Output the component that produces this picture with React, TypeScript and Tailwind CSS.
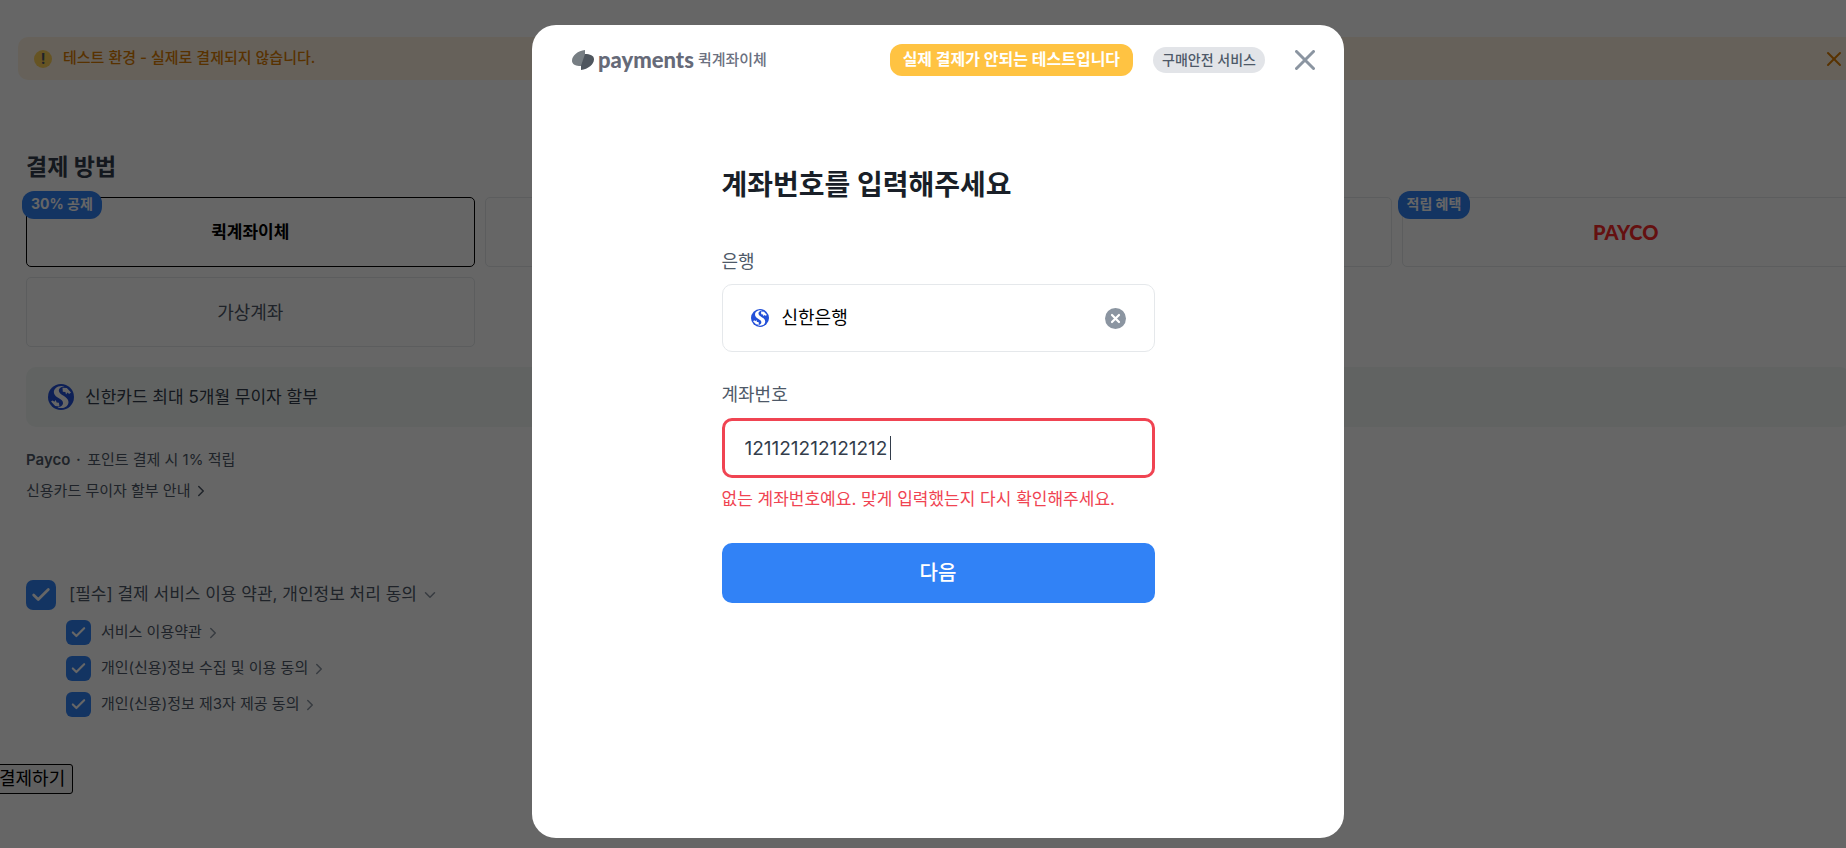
import React, { useState } from 'react';
import { Check, ChevronDown, ChevronRight, X } from 'lucide-react';

const ShinhanLogo = ({ className }: { className: string }) => (
  <svg viewBox="0 0 26 26" className={className} aria-hidden="true">
    <circle cx="13" cy="13" r="13" fill="#2350d8" />
    <path
      d="M16.500 2.300C10 .8 5 4.500 6 9.300c1 4.800 9.200 5.500 9 9.700-.1 2.500-2.600 4.300-5.700 4.200 5.300 2.300 11.200-.2 11.200-5.200 0-5.600-9.800-6.900-9.700-11.500 0-2.200 2.200-3.800 5.700-4.200z"
      fill="#fff"
    />
    <path d="M14.500 3.700l4.300.2 4.200 4.700-1.900 1.300-1.600-1.300-1.500 1.800-.6-2.500-2.600-.2z" fill="#fff" />
    <path d="M11.500 22.600l-4.300-.5L3 17.600l1.700-1.200 1.600 1.400 1.500-1.900.8 2.700 2.300.1z" fill="#fff" />
  </svg>
);

const PaymentsMark = () => (
  <svg viewBox="0 0 22 20" className="h-5 w-[22px]" aria-hidden="true">
    <path d="M13 0v15.500C11 16 9 16.200 7 16 3 15.600 0 14 0 10.800 0 5.500 6 .8 13 0z" fill="#777e83" />
    <path d="M13 4c5 0 9 1.500 9 5.300C22 14.500 16 19.200 9 20v-4.200z" fill="#4f565e" />
  </svg>
);

const terms = ['서비스 이용약관', '개인(신용)정보 수집 및 이용 동의', '개인(신용)정보 제3자 제공 동의'];

const methods = [
  { name: '퀵계좌이체', badge: '30% 공제' },
  { name: '신용·체크카드' },
  { name: '토스페이' },
  { name: 'PAYCO', badge: '적립 혜택' },
  { name: '가상계좌' },
];

const App = () => {
  const [account, setAccount] = useState('121121212121212');

  return (
    <div className="relative h-screen overflow-hidden bg-white font-['Inter','Noto_Sans_CJK_KR',sans-serif] text-[#333d4b]">
      <main className="-mr-[13px] pt-[37px]">
        <div className="ml-[18px] flex h-[43px] items-center rounded-[10px] bg-[#fff3e0] pr-[13px] pl-4 text-[#dd7d02]">
          <span className="flex h-[18px] w-[18px] items-center justify-center rounded-full bg-[#ffd158] text-sm font-bold text-[#4e5968]">
            !
          </span>
          <p className="ml-[11px] flex-1 text-[15px] font-medium">테스트 환경 - 실제로 결제되지 않습니다.</p>
          <button aria-label="닫기">
            <X className="h-6 w-6" strokeWidth={2} />
          </button>
        </div>

        <section className="mr-[9px] ml-[26px]">
          <h2 className="mt-[71px] text-[23px] leading-8 font-bold">결제 방법</h2>
          <div className="mt-[14px] grid grid-cols-4 gap-[10px]">
            {methods.map((method, i) => (
              <button
                key={method.name}
                className={
                  i === 0
                    ? 'relative h-[70px] rounded-[5px] border border-black pt-[2px] text-[17px] font-bold text-black'
                    : 'relative h-[70px] rounded-[5px] border border-[#e5e8eb] pt-[2px] text-lg text-[#4e5968]'
                }
              >
                {method.badge && (
                  <span className="absolute -top-[7px] -left-[5px] h-7 rounded-xl bg-[#3182f6] px-[9px] text-sm leading-[26px] font-bold text-white">
                    {method.badge}
                  </span>
                )}
                {method.name === 'PAYCO' ? (
                  <span className="font-['Lato'] text-xl font-black text-[#fa2828]">PAYCO</span>
                ) : (
                  method.name
                )}
              </button>
            ))}
          </div>

          <div className="mt-5 flex h-[60px] items-center gap-[11px] rounded-[10px] bg-[#f2f8f6] pl-[22px] text-[17px]">
            <ShinhanLogo className="h-[26px] w-[26px]" />
            <p className="pt-[2px]">신한카드 최대 5개월 무이자 할부</p>
          </div>

          <p className="mt-[21px] text-[15px] leading-6 text-[#4e5968]">
            <b className="font-semibold">
              Payco <span className="px-[2px]">·</span>
            </b>{' '}
            포인트 결제 시 1% 적립
          </p>
          <a href="#installment" className="mt-[7px] flex items-center gap-[2px] text-[15px] leading-6 text-[#4e5968]">
            신용카드 무이자 할부 안내
            <ChevronRight className="h-[18px] w-[18px]" strokeWidth={2} />
          </a>

          <div className="mt-[77px] flex h-[30px] items-center">
            <label className="flex items-center gap-[13px] text-[17px] text-[#4e5968]">
              <span className="relative flex h-[30px] w-[30px]">
                <input type="checkbox" defaultChecked className="h-full w-full appearance-none rounded-[7px] bg-[#3182f6]" />
                <Check className="pointer-events-none absolute inset-1 h-[22px] w-[22px] text-white" strokeWidth={3} />
              </span>
              [필수] 결제 서비스 이용 약관, 개인정보 처리 동의
            </label>
            <ChevronDown className="ml-1 h-[18px] w-[18px] text-[#8b95a1]" />
          </div>
          <ul className="mt-[10px] ml-10 space-y-[11px]">
            {terms.map((term) => (
              <li key={term} className="flex h-[25px] items-center">
                <label className="flex items-center gap-[10px] text-[15px] text-[#4e5968]">
                  <span className="relative flex h-[25px] w-[25px]">
                    <input type="checkbox" defaultChecked className="h-full w-full appearance-none rounded-md bg-[#3182f6]" />
                    <Check className="pointer-events-none absolute inset-1 h-[17px] w-[17px] text-white" strokeWidth={3} />
                  </span>
                  {term}
                </label>
                <ChevronRight className="ml-[2px] h-[18px] w-[18px] text-[#8b95a1]" />
              </li>
            ))}
          </ul>
        </section>

        <button className="mt-[47px] -ml-[9px] h-[30px] rounded-[3px] border border-black bg-[#efefef] px-[7px] text-lg leading-7 text-black">
          결제하기
        </button>
      </main>

      <div className="absolute inset-0 flex items-start justify-center bg-black/60 pt-[25px] pl-[30px]">
        <div role="dialog" aria-modal="true" className="h-[813px] w-[812px] rounded-3xl bg-white">
          <header className="flex h-[70px] items-center pr-[29px] pl-10">
            <PaymentsMark />
            <span className="ml-1 font-['Lato'] text-[22px] leading-7 font-black text-[#666a78]">payments</span>
            <span className="ml-1 text-[15px] font-medium text-[#6b7080]">퀵계좌이체</span>
            <span className="ml-auto h-8 rounded-xl bg-[#ffc342] px-[13px] text-base leading-[30px] font-bold text-white">
              실제 결제가 안되는 테스트입니다
            </span>
            <span className="ml-5 h-[26px] rounded-full bg-[#e2e4e8] px-[9px] text-sm leading-[26px] font-medium text-[#4e5968]">
              구매안전 서비스
            </span>
            <button aria-label="닫기" className="ml-[30px]">
              <svg viewBox="0 0 20 20" className="h-5 w-5 stroke-[#8b95a1]" strokeWidth="3" strokeLinecap="round">
                <path d="M1.500 1.500l17 17M18.500 1.500l-17 17" />
              </svg>
            </button>
          </header>

          <form className="mx-auto w-[433px] pt-[70px]" onSubmit={(e) => e.preventDefault()}>
            <h1 className="text-[28px] leading-10 font-bold text-[#191f28]">계좌번호를 입력해주세요</h1>
            <label htmlFor="bank" className="mt-[45px] block text-lg leading-6 text-[#4e5968]">
              은행
            </label>
            <div className="mt-[10px] flex h-[68px] items-center rounded-[10px] border border-[#e5e8eb] px-7">
              <ShinhanLogo className="h-[18px] w-[18px]" />
              <input id="bank" readOnly value="신한은행" className="ml-[13px] min-w-0 flex-1 text-lg text-black outline-none" />
              <button type="button" aria-label="은행 지우기">
                <svg viewBox="0 0 21 21" className="h-[21px] w-[21px]">
                  <circle cx="10.500" cy="10.500" r="10.500" fill="#8b95a1" />
                  <path d="M7 7l7 7M14 7l-7 7" stroke="#fff" strokeWidth="2.200" strokeLinecap="round" />
                </svg>
              </button>
            </div>
            <label htmlFor="account" className="mt-[31px] block text-lg leading-6 text-[#4e5968]">
              계좌번호
            </label>
            <div className="relative mt-[11px]">
              <input
                id="account"
                value={account}
                onChange={(e) => setAccount(e.target.value)}
                className="block h-[60px] w-full rounded-[10px] border-[3px] border-[#f04452] px-5 text-[19px] text-[#333d4b] caret-transparent outline-none"
              />
              <span className="pointer-events-none absolute top-[18px] left-[168px] h-6 w-px bg-[#333d4b]" />
            </div>
            <p className="mt-[9px] text-[17px] leading-6 text-[#f04452]">
              없는 계좌번호예요. 맞게 입력했는지 다시 확인해주세요.
            </p>
            <button className="mt-8 h-[60px] w-full rounded-[10px] bg-[#3182f6] text-xl font-medium text-white">다음</button>
          </form>
        </div>
      </div>
    </div>
  );
};

export default App;
